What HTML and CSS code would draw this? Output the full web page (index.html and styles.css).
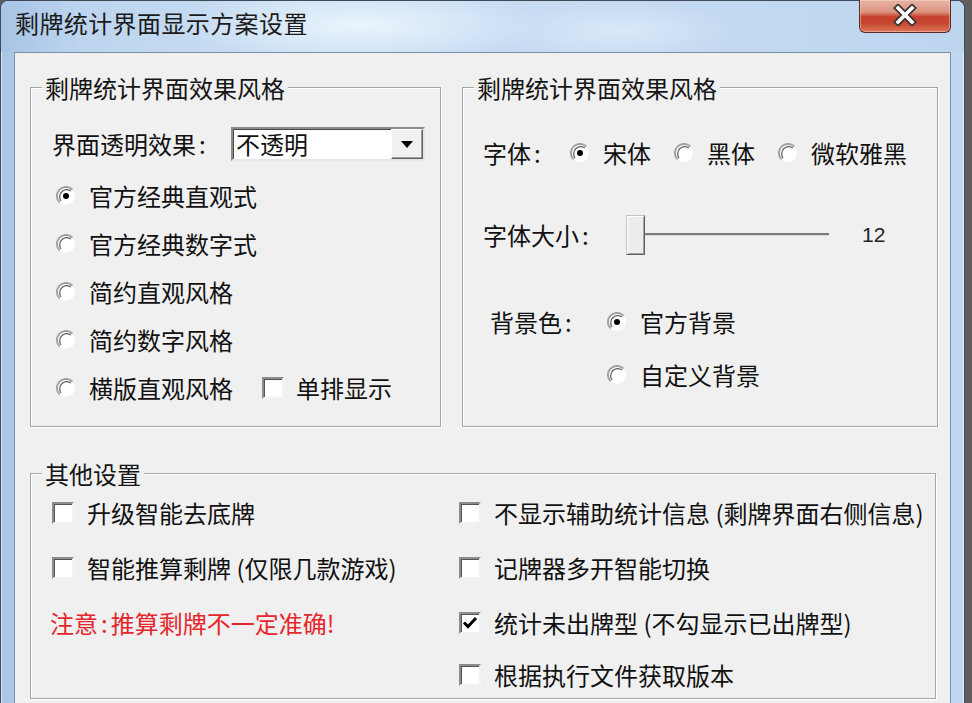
FILE: index.html
```html
<!DOCTYPE html>
<html lang="zh-CN">
<head>
<meta charset="utf-8">
<title>剩牌统计界面显示方案设置</title>
<link rel="stylesheet" href="styles.css">
</head>
<body>
<div class="window">
  <div class="titlebar">
    <div class="title">剩牌统计界面显示方案设置</div>
    <div class="close">
      <svg width="26" height="22" viewBox="0 0 26 22">
        <path d="M6 4 L20 18 M20 4 L6 18" stroke="#3a3230" stroke-width="7" stroke-linecap="square"/>
        <path d="M6 4 L20 18 M20 4 L6 18" stroke="#ffffff" stroke-width="3.6" stroke-linecap="square"/>
      </svg>
    </div>
  </div>
  <div class="panel">
    <div class="top-row">
      <div class="group g1">
        <div class="legend">剩牌统计界面效果风格</div>
        <div class="combo-row">
          <span class="lbl lbl-combo">界面透明效果<span class="colon">:</span></span>
          <div class="combo">
            <span class="combo-text">不透明</span>
            <span class="combo-btn">
              <svg width="12" height="7" viewBox="0 0 12 7"><path d="M0 0 H12 L6 7 Z" fill="#000"/></svg>
            </span>
          </div>
        </div>
        <div class="radio-list">
          <div class="opt-row">
            <svg class="radio" viewBox="0 0 20 20"><circle cx="10" cy="10" r="9" fill="#fff"/><path d="M3.6 16.4 A9 9 0 0 1 16.4 3.6" fill="none" stroke="#a0a0a0" stroke-width="2"/><path d="M5.1 14.9 A7 7 0 0 1 14.9 5.1" fill="none" stroke="#5a5a5a" stroke-width="1.2"/><circle cx="10" cy="10" r="3" fill="#000"/></svg>
            <span>官方经典直观式</span>
          </div>
          <div class="opt-row">
            <svg class="radio" viewBox="0 0 20 20"><circle cx="10" cy="10" r="9" fill="#fff"/><path d="M3.6 16.4 A9 9 0 0 1 16.4 3.6" fill="none" stroke="#a0a0a0" stroke-width="2"/><path d="M5.1 14.9 A7 7 0 0 1 14.9 5.1" fill="none" stroke="#5a5a5a" stroke-width="1.2"/></svg>
            <span>官方经典数字式</span>
          </div>
          <div class="opt-row">
            <svg class="radio" viewBox="0 0 20 20"><circle cx="10" cy="10" r="9" fill="#fff"/><path d="M3.6 16.4 A9 9 0 0 1 16.4 3.6" fill="none" stroke="#a0a0a0" stroke-width="2"/><path d="M5.1 14.9 A7 7 0 0 1 14.9 5.1" fill="none" stroke="#5a5a5a" stroke-width="1.2"/></svg>
            <span>简约直观风格</span>
          </div>
          <div class="opt-row">
            <svg class="radio" viewBox="0 0 20 20"><circle cx="10" cy="10" r="9" fill="#fff"/><path d="M3.6 16.4 A9 9 0 0 1 16.4 3.6" fill="none" stroke="#a0a0a0" stroke-width="2"/><path d="M5.1 14.9 A7 7 0 0 1 14.9 5.1" fill="none" stroke="#5a5a5a" stroke-width="1.2"/></svg>
            <span>简约数字风格</span>
          </div>
          <div class="opt-row">
            <svg class="radio" viewBox="0 0 20 20"><circle cx="10" cy="10" r="9" fill="#fff"/><path d="M3.6 16.4 A9 9 0 0 1 16.4 3.6" fill="none" stroke="#a0a0a0" stroke-width="2"/><path d="M5.1 14.9 A7 7 0 0 1 14.9 5.1" fill="none" stroke="#5a5a5a" stroke-width="1.2"/></svg>
            <span>横版直观风格</span>
            <span class="check-inline">
              <span class="checkbox"></span>
              <span>单排显示</span>
            </span>
          </div>
        </div>
      </div>

      <div class="group g2">
        <div class="legend">剩牌统计界面效果风格</div>
        <div class="row r-font">
          <span class="lbl lbl-font">字体<span class="colon">:</span></span>
          <span class="font-opt">
            <svg class="radio" viewBox="0 0 20 20"><circle cx="10" cy="10" r="9" fill="#fff"/><path d="M3.6 16.4 A9 9 0 0 1 16.4 3.6" fill="none" stroke="#a0a0a0" stroke-width="2"/><path d="M5.1 14.9 A7 7 0 0 1 14.9 5.1" fill="none" stroke="#5a5a5a" stroke-width="1.2"/><circle cx="10" cy="10" r="3" fill="#000"/></svg>
            <span>宋体</span>
          </span>
          <span class="font-opt">
            <svg class="radio" viewBox="0 0 20 20"><circle cx="10" cy="10" r="9" fill="#fff"/><path d="M3.6 16.4 A9 9 0 0 1 16.4 3.6" fill="none" stroke="#a0a0a0" stroke-width="2"/><path d="M5.1 14.9 A7 7 0 0 1 14.9 5.1" fill="none" stroke="#5a5a5a" stroke-width="1.2"/></svg>
            <span>黑体</span>
          </span>
          <span class="font-opt">
            <svg class="radio" viewBox="0 0 20 20"><circle cx="10" cy="10" r="9" fill="#fff"/><path d="M3.6 16.4 A9 9 0 0 1 16.4 3.6" fill="none" stroke="#a0a0a0" stroke-width="2"/><path d="M5.1 14.9 A7 7 0 0 1 14.9 5.1" fill="none" stroke="#5a5a5a" stroke-width="1.2"/></svg>
            <span>微软雅黑</span>
          </span>
        </div>
        <div class="row r-size">
          <span class="lbl lbl-size">字体大小<span class="colon">:</span></span>
          <span class="thumb"></span>
          <span class="track"></span>
          <span class="size-val">12</span>
        </div>
        <div class="row r-bg">
          <span class="lbl lbl-bg">背景色<span class="colon">:</span></span>
          <span class="font-opt">
            <svg class="radio" viewBox="0 0 20 20"><circle cx="10" cy="10" r="9" fill="#fff"/><path d="M3.6 16.4 A9 9 0 0 1 16.4 3.6" fill="none" stroke="#a0a0a0" stroke-width="2"/><path d="M5.1 14.9 A7 7 0 0 1 14.9 5.1" fill="none" stroke="#5a5a5a" stroke-width="1.2"/><circle cx="10" cy="10" r="3" fill="#000"/></svg>
            <span>官方背景</span>
          </span>
        </div>
        <div class="row r-bg2">
          <span class="font-opt">
            <svg class="radio" viewBox="0 0 20 20"><circle cx="10" cy="10" r="9" fill="#fff"/><path d="M3.6 16.4 A9 9 0 0 1 16.4 3.6" fill="none" stroke="#a0a0a0" stroke-width="2"/><path d="M5.1 14.9 A7 7 0 0 1 14.9 5.1" fill="none" stroke="#5a5a5a" stroke-width="1.2"/></svg>
            <span>自定义背景</span>
          </span>
        </div>
      </div>
    </div>

    <div class="group g3">
      <div class="legend">其他设置</div>
      <div class="other-grid">
        <div class="cell"><span class="checkbox"></span><span>升级智能去底牌</span></div>
        <div class="cell"><span class="checkbox"></span><span>不显示辅助统计信息 (剩牌界面右侧信息)</span></div>
        <div class="cell"><span class="checkbox"></span><span>智能推算剩牌 (仅限几款游戏)</span></div>
        <div class="cell"><span class="checkbox"></span><span>记牌器多开智能切换</span></div>
        <div class="cell warn">注意<span class="colon">:</span>推算剩牌不一定准确!</div>
        <div class="cell"><span class="checkbox checked"><svg width="18" height="18" viewBox="0 0 18 18"><path d="M3 8.5 L7 12.5 L15 4" fill="none" stroke="#000" stroke-width="3"/></svg></span><span>统计未出牌型 (不勾显示已出牌型)</span></div>
        <div class="cell"></div>
        <div class="cell"><span class="checkbox"></span><span>根据执行文件获取版本</span></div>
      </div>
    </div>
  </div>
</div>
</body>
</html>
```

FILE: styles.css
```css
html, body {
  margin: 0;
  padding: 0;
}

body {
  width: 972px;
  height: 703px;
  overflow: hidden;
  background: #5e5e5e;
  font-family: "Noto Sans CJK SC", "Liberation Sans", sans-serif;
  color: #111;
}

.window {
  width: 965px;
  height: 760px;
  box-sizing: border-box;
  border: 1px solid #3e4a57;
  border-bottom: none;
  border-radius: 8px 8px 0 0;
  padding: 0 13px;
  background: linear-gradient(to right, #a9c6e7 0%, #bdd5ef 10%, #c6dcf2 50%, #bfd7f1 100%);
  box-shadow: inset 1px 1px 0 rgba(255, 255, 255, 0.6), inset -1px 0 0 rgba(255, 255, 255, 0.6);
}

.titlebar {
  display: flex;
  justify-content: space-between;
  align-items: flex-start;
  height: 51px;
  margin: 0 -13px;
  padding: 0 13px;
  border-radius: 7px 7px 0 0;
  background:
    radial-gradient(ellipse 240px 50px at 360px 24px, rgba(236, 245, 253, 0.95), rgba(236, 245, 253, 0) 75%),
    radial-gradient(ellipse 160px 40px at 620px 30px, rgba(226, 238, 250, 0.7), rgba(226, 238, 250, 0) 75%),
    linear-gradient(to right, #a7c4e6 0%, #bcd4ee 8%, #cadff4 30%, #c5dbf2 60%, #bdd5ef 100%);
}

.title {
  margin-top: 8px;
  padding-left: 1px;
  font-size: 24px;
  line-height: 28px;
  letter-spacing: 0.4px;
  color: #1b1b1b;
}

.close {
  width: 92px;
  height: 33px;
  margin-top: -1px;
  box-sizing: border-box;
  border: 1px solid #5a2c26;
  border-top: none;
  border-radius: 0 0 6px 6px;
  background: linear-gradient(to bottom, #e8b4a6 0%, #dc9380 38%, #c6412d 52%, #c54630 72%, #de7558 100%);
  box-shadow: inset 0 0 0 1px rgba(255, 220, 210, 0.45);
  display: flex;
  align-items: center;
  justify-content: center;
}

.close svg {
  margin-top: -3px;
}

.panel {
  height: 708px;
  box-sizing: border-box;
  border: 1px solid #7f8fa1;
  background: #f0f0f0;
  padding: 34px 0 0 15px;
}

.top-row {
  display: flex;
  gap: 21px;
}

.group {
  box-sizing: border-box;
  border: 1px solid #a6a6a6;
  box-shadow: 1px 1px 0 #ffffff, inset 1px 1px 0 #ffffff;
}

.g1 {
  width: 411px;
  height: 340px;
}

.g2 {
  width: 476px;
  height: 340px;
}

.g3 {
  width: 906px;
  height: 226px;
  margin-top: 46px;
}

.legend {
  display: block;
  width: max-content;
  margin: -14px 0 0 11px;
  padding: 0 3px;
  background: #f0f0f0;
  font-size: 24px;
  line-height: 28px;
  color: #151515;
}

.colon {
  margin: 0 3px;
}

.lbl {
  font-size: 24px;
  line-height: 28px;
  flex: none;
}

/* group 1 */
.combo-row {
  display: flex;
  align-items: center;
  height: 34px;
  margin-top: 25px;
  padding-left: 21px;
}

.lbl-combo {
  width: 179px;
}

.combo {
  width: 194px;
  height: 34px;
  box-sizing: border-box;
  display: flex;
  align-items: center;
  justify-content: space-between;
  background: #fff;
  border: 2px solid;
  border-color: #8a8a8a #e6e6e6 #e6e6e6 #8a8a8a;
  box-shadow: inset 1px 1px 0 #4a4a4a;
}

.combo-text {
  padding-left: 3px;
  font-size: 24px;
  line-height: 28px;
}

.combo-btn {
  width: 32px;
  height: 30px;
  box-sizing: border-box;
  display: flex;
  align-items: center;
  justify-content: center;
  background: #f0f0f0;
  border: 1px solid;
  border-color: #ffffff #5e5e5e #5e5e5e #ffffff;
  box-shadow: inset -1px -1px 0 #a0a0a0;
}

.radio-list {
  margin-top: 11px;
  padding-left: 25px;
}

.opt-row {
  display: flex;
  align-items: center;
  height: 48px;
  font-size: 24px;
  line-height: 28px;
}

.radio {
  width: 20px;
  height: 20px;
  flex: none;
  margin-right: 13px;
}

.check-inline {
  display: flex;
  align-items: center;
  margin-left: 29px;
}

.checkbox {
  width: 22px;
  height: 22px;
  flex: none;
  box-sizing: border-box;
  display: inline-flex;
  align-items: center;
  justify-content: center;
  background: #fff;
  border: 2px solid;
  border-color: #8c8c8c #f2f2f2 #f2f2f2 #8c8c8c;
  box-shadow: inset 1px 1px 0 #555;
  margin-right: 12px;
}

/* group 2 */
.row {
  display: flex;
  align-items: center;
  font-size: 24px;
  line-height: 28px;
}

.r-font {
  height: 34px;
  margin-top: 34px;
  padding-left: 20px;
}

.lbl-font {
  width: 87px;
}

.font-opt {
  display: flex;
  align-items: center;
  margin-right: 23px;
}

.r-size {
  height: 42px;
  margin-top: 44px;
  padding-left: 20px;
}

.lbl-size {
  width: 143px;
}

.thumb {
  width: 19px;
  height: 40px;
  box-sizing: border-box;
  flex: none;
  background: #ececec;
  border: 1px solid;
  border-color: #c4c4c4 #5e5e5e #5e5e5e #c4c4c4;
  box-shadow: inset 1px 1px 0 #fff, inset -1px -1px 0 #a4a4a4;
}

.track {
  width: 184px;
  height: 3px;
  box-sizing: border-box;
  flex: none;
  margin-top: -2px;
  border-top: 2px solid #7c7c7c;
  border-bottom: 1px solid #d8d8d8;
}

.size-val {
  margin-left: 33px;
  font-family: "Liberation Sans", "DejaVu Sans", sans-serif;
  font-size: 21px;
  color: #222;
}

.r-bg {
  height: 34px;
  margin-top: 49px;
  padding-left: 27px;
}

.lbl-bg {
  width: 117px;
}

.r-bg2 {
  height: 34px;
  margin-top: 19px;
  padding-left: 144px;
}

/* group 3 */
.other-grid {
  display: grid;
  grid-template-columns: 407px 1fr;
  grid-template-rows: 52px 58px 52px 52px;
  margin-top: -1px;
  padding-left: 21px;
}

.cell {
  display: flex;
  align-items: center;
  font-size: 24px;
  line-height: 28px;
  white-space: nowrap;
}

.cell .checkbox {
  margin-right: 13px;
}

.warn {
  margin-left: -2px;
  color: #e5262b;
}
```
